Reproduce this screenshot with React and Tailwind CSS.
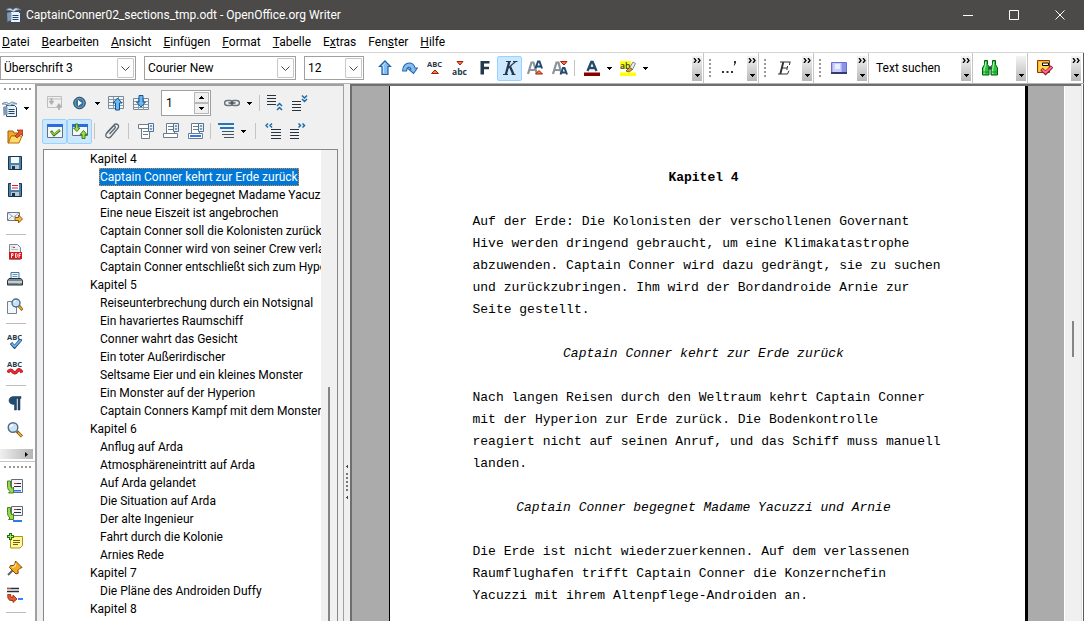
import React from "react";

const Svg = ({ children, crisp, label }) => (
  <svg viewBox="0 0 16 16" className="h-4 w-4 shrink-0" fill="none" shapeRendering={crisp ? "crispEdges" : "auto"} aria-hidden={label ? undefined : true}>
    {children}
  </svg>
);

const DocMark = () => (
  <>
    <path d="M4.500 4.500h8l2 2v9h-10z" fill="#eaf2fa" stroke="#2c4a66" />
    <path d="M6.500 8.500h6M6.500 10.500h6M6.500 12.500h6" stroke="#1f4468" strokeWidth="1" />
    <path d="M0 3c3-2.500 5-2 7 0c2-3 5-2 8 0c-3-.5-5 0-7 2C5 3.500 3 3 0 3z" fill="#c8dcee" stroke="#5f7b95" strokeWidth=".8" />
    <path d="M1 6c2-1 3.500-1 4.500 0v8c-1.500-.5-2.500-.5-4 1z" fill="#7d9bb6" />
  </>
);

const Arrow = () => (
  <svg viewBox="0 0 5 3" className="h-[3px] w-[5px] shrink-0" shapeRendering="crispEdges" aria-hidden="true">
    <path d="M0 0h5L2.500 3z" fill="#000" />
  </svg>
);

const icons = {
  newDoc: <Svg><DocMark /></Svg>,
  open: (
    <Svg>
      <path d="M1 3h5l1 2h5v3H5l-3 7H1z" fill="#f0a92b" stroke="#a15a08" />
      <path d="M4 8h11l-3 7H1.500z" fill="#ffd968" stroke="#b5700e" />
      <path d="M8 8l4-4-2-2h6v6l-2-2-4 4z" fill="#e2582a" stroke="#8e240b" strokeWidth=".7" />
    </Svg>
  ),
  save: (
    <Svg>
      <path d="M1.500 1.500h13v13h-13z" fill="#4f81a8" stroke="#17354f" />
      <path d="M4 2h8v6H4z" fill="#f7fafc" /><path d="M4 10h8v4H4z" fill="#b9c9d6" /><path d="M5 11h3v3H5z" fill="#17354f" />
    </Svg>
  ),
  saveAs: (
    <Svg>
      <path d="M1.500 1.500h13v13h-13z" fill="#4f81a8" stroke="#17354f" />
      <path d="M4 1h8v7H4z" fill="#fff" /><path d="M5 3h6v1H5zM5 5.500h6v1H5z" fill="#dd2030" /><path d="M4 10h8v4H4z" fill="#b9c9d6" /><path d="M5 11h3v3H5z" fill="#17354f" />
    </Svg>
  ),
  mail: (
    <Svg>
      <path d="M.5 3.500h12v8H.5z" fill="#f2f6fa" stroke="#67788a" />
      <path d="M1 4l5.500 4L12 4M1 11l4-4M12 11L8 7" stroke="#8494a4" strokeWidth=".8" />
      <path d="M8 8.500h3.500V6l4 4-4 4v-2.500H8z" fill="#f7b944" stroke="#8a4b07" strokeWidth=".9" />
    </Svg>
  ),
  pdf: (
    <Svg>
      <path d="M2.500 .5h8l3 3v12h-11z" fill="#eef1f4" stroke="#7b8894" />
      <path d="M4 3h4M4 5.500h7" stroke="#b9c0c7" /><path d="M6 3h2v1H6z" fill="#e33" /><path d="M2 8h13v7H2z" fill="#e01216" />
      <path d="M4.500 14V9.500h1.500v2H4.500M8.500 9.500v4h1l.7-.8V10.300l-.7-.8zM12 14V9.500h2M12 11.500h1.500" stroke="#fff" strokeWidth=".9" />
    </Svg>
  ),
  print: (
    <Svg>
      <path d="M4 1.500h8V8H4z" fill="#eff7fd" stroke="#4b7695" /><path d="M5.500 3.500h5M5.500 5.500h5" stroke="#5c97c4" />
      <path d="M2 7.500h12l1.500 2v4.500H.5V9.500z" fill="#7b8790" stroke="#29333b" /><path d="M1 10h14v2H1z" fill="#c4cdd4" /><path d="M11 12h2v1h-2z" fill="#5bdc24" />
    </Svg>
  ),
  preview: (
    <Svg>
      <path d="M.5 3.500h9v12h-9z" fill="#f3f7fa" stroke="#73828f" />
      <circle cx="9" cy="5" r="4" fill="#c8e1f5" stroke="#4a6f8d" strokeWidth="1.400" /><path d="M7 4l2-1.500" stroke="#fff" />
      <path d="M12 8l3.500 4" stroke="#84510c" strokeWidth="2.800" /><path d="M12.300 8.500l2.700 3" stroke="#efb343" strokeWidth="1.300" />
    </Svg>
  ),
  spell: (
    <Svg>
      <text x="0" y="6.500" fontSize="7.500" fontWeight="700" fontFamily="Open Sans, sans-serif" fill="#26384a">ABC</text>
      <path d="M4 10l3.500 4L14 6.500" stroke="#174e84" strokeWidth="3.200" /><path d="M4.500 10.500L7.500 13.500 13.700 7" stroke="#78b8ee" strokeWidth="1.600" />
    </Svg>
  ),
  autoSpell: (
    <Svg>
      <text x="0" y="6.500" fontSize="7.500" fontWeight="700" fontFamily="Open Sans, sans-serif" fill="#26384a">ABC</text>
      <path d="M.8 12.500q2.400-4 4.800-1t4.600-.4t4.800 1.400" stroke="#a80f16" strokeWidth="3.200" /><path d="M1 12.300q2.300-3.600 4.600-.8t4.600-.4t4.600 1.200" stroke="#ee2830" strokeWidth="2" />
    </Svg>
  ),
  pilcrow: (
    <Svg>
      <path d="M7 1.500H14v2h-1V15h-2V3.500H9.500V15h-2V9.500C4 9.500 2 8 2 5.500S4 1.500 7 1.500z" fill="#214c70" stroke="#152f48" strokeWidth=".5" />
    </Svg>
  ),
  find: (
    <Svg>
      <circle cx="6" cy="5.500" r="4.800" fill="#cae4f7" stroke="#536b80" strokeWidth="1.400" /><path d="M3 5q1-2 3-2" stroke="#fff" strokeWidth="1.300" />
      <path d="M10 9.500l5 5" stroke="#7a4d0c" strokeWidth="3" /><path d="M11 10.500l3.700 3.700" stroke="#f4b83d" strokeWidth="1.500" />
    </Svg>
  ),
  field: (
    <Svg>
      <path d="M4.500 .5h11v13h-11z" fill="#f4f7fa" stroke="#5d6e7d" /><path d="M7 4.500h7M7 7.500h7" stroke="#24303b" /><path d="M7 4h3v1H7z" fill="#d22" /><path d="M7 11h7v1.500H7z" fill="#2f78f0" />
      <path d="M.5 2h3v5l1.500 2.500L6.500 8v6H1.500l1.500-1.500C1 11 .5 9 .5 7z" fill="#9ed850" stroke="#3a7711" strokeWidth=".9" />
    </Svg>
  ),
  footnote: (
    <Svg>
      <path d="M4.500 .5h11v9h-11z" fill="#f4f7fa" stroke="#5d6e7d" /><path d="M7 3.500h7M7 6.500h7" stroke="#24303b" /><path d="M7 3h3v1H7z" fill="#d22" /><path d="M6 14h9v2H6z" fill="#2f78f0" />
      <path d="M.5 1.500h3v5L5 9l1.500-1.500v6H1.500L3 12C1 10.500 .5 8.500 .5 6.500z" fill="#9ed850" stroke="#3a7711" strokeWidth=".9" />
    </Svg>
  ),
  note: (
    <Svg>
      <path d="M3.500 3.500h12v9l-2.500 2.500H3.500z" fill="#fff59a" stroke="#aa9313" /><path d="M6 7.500h7M6 9.500h7M6 11.500h5" stroke="#70600c" />
      <path d="M3.500 0v7M0 3.500h7" stroke="#256d12" strokeWidth="3" /><path d="M3.500 1v5M1 3.500h5" stroke="#a7ec51" />
    </Svg>
  ),
  pin: (
    <Svg>
      <path d="M6 10l-5 5" stroke="#57636e" strokeWidth="2" /><path d="M8.500 1L15 7.500l-2 .8-2 2 .2 3L9 14 2.500 7.500l1-2h3l1.500-2z" fill="#f4a91e" stroke="#7d4707" /><path d="M9 3.500l-1 3-3 1" stroke="#ffe79d" strokeWidth="1.300" />
    </Svg>
  ),
  hyperline: (
    <Svg>
      <path d="M0 1.500h12M0 4.500h12" stroke="#24303b" strokeWidth="1.300" /><path d="M0 1h4v1H0z" fill="#e33" /><path d="M11 11h5v2h-5z" fill="#3c80f5" />
      <path d="M.7 7.500h3V10H6V8l4 4-4 3.500V13.500H4C1.500 13.500 .5 11 .7 7.500z" fill="#e75b29" stroke="#8a2209" strokeWidth=".8" />
    </Svg>
  ),
  up: <Svg><path d="M8 .8L13.500 6.500H11v8H5v-8H2.500z" fill="#86bfee" stroke="#1d5fa8" strokeWidth="1.200" /><path d="M6.500 13V6h-1L8 3" stroke="#c7e3fb" /></Svg>,
  curve: <Svg><path d="M.7 11C.5 6 4 2.500 8 3q4 .5 5 5h2.300l-3.800 5.500L6.500 9H9C8 6.500 5 6.500 4.500 11z" fill="#86bfee" stroke="#2366af" strokeWidth="1.100" /></Svg>,
  superscript: <Svg><text x="0" y="7" fontSize="7.500" fontWeight="700" fontFamily="Open Sans, sans-serif" fill="#26384a">ABC</text><path d="M4.500 13.500L8 10l3.500 3.500z" fill="#f37d3a" stroke="#a71d0b" /></Svg>,
  subscript: <Svg><path d="M5 1.500h6L8 5z" fill="#f37d3a" stroke="#a71d0b" /><text x="0" y="14.500" fontSize="8.500" fontWeight="700" fontFamily="Open Sans, sans-serif" fill="#26384a">abc</text></Svg>,
  bold: <Svg><path d="M3.500 1h9v2.600H7v3.200h5v2.500H7v5.200H3.500z" fill="#24384c" /></Svg>,
  italic: (
    <Svg>
      <path d="M4 1.500h5M1 14.500h5M11 1.500h4.500M9.500 14.500h4" stroke="#24384c" strokeWidth="1.100" />
      <path d="M7.300 1.500L3.800 14.500" stroke="#24384c" strokeWidth="2.300" /><path d="M13.700 1.500L6 8" stroke="#24384c" strokeWidth="1.200" /><path d="M8 6.500l3.500 8" stroke="#24384c" strokeWidth="2.300" />
    </Svg>
  ),
  grow: (
    <Svg>
      <path d="M1 14L4.500 2.500h2L10 14M2.500 10h6" stroke="#8b949d" strokeWidth="2.200" />
      <path d="M8.500 8.500L11 1.500h1.500L15 8.500M9.500 6.500h4.500" stroke="#214c70" strokeWidth="2" /><path d="M8.500 14L12 10.500l3.500 3.500z" fill="#f37d3a" stroke="#a71d0b" />
    </Svg>
  ),
  shrink: (
    <Svg>
      <path d="M1 14L4.500 2.500h2L9.500 14M2.500 10h6" stroke="#8b949d" strokeWidth="2.200" />
      <path d="M8.500 14.500L11 8h1.500l2.500 6.500M9.500 12.500h4.500" stroke="#214c70" strokeWidth="2" /><path d="M8.500 1.500h6.500L12 5z" fill="#f37d3a" stroke="#a71d0b" />
    </Svg>
  ),
  fontColor: <Svg><path d="M3.500 11L7.300 2h1.400l3.800 9M5 8h6" stroke="#24496b" strokeWidth="2.300" /><path d="M0 12.500h16v3.500H0z" fill="#880000" /></Svg>,
  highlight: (
    <Svg>
      <path d="M0 1h11v8H0zM0 12.500h16V16H0z" fill="#ffff00" /><text x="0" y="8.500" fontSize="8.500" fontWeight="600" fontFamily="Open Sans, sans-serif" fill="#26384a">ab</text>
      <path d="M9.500 8L13 2l2.500 1.500-3 6z" fill="#e9edf0" stroke="#7b8791" /><path d="M6 11l3.500-3.500 3 2L9 12z" fill="#d8a13a" stroke="#70400a" strokeWidth=".8" />
    </Svg>
  ),
  dots: <Svg><path d="M1 11h2v2H1zM5.500 11h2v2h-2zM10 11h2v2h-2z" fill="#333" /><path d="M13 1h2v2l-1.500 2.500h-.8L13.500 3H13z" fill="#333" /></Svg>,
  emphasis: (
    <Svg>
      <path d="M4 2h10.500M2 14h9.500M6 8h5" stroke="#333" strokeWidth="1.100" /><path d="M7.300 2L4.300 14" stroke="#333" strokeWidth="1.900" />
      <path d="M14 2l-.6 3M11.600 6l-.8 4M11.500 14l1.500-3.300" stroke="#333" />
    </Svg>
  ),
  screen: (
    <Svg>
      <path d="M.5 2.500h15v10H.5z" fill="#8d93ea" stroke="#6a70d2" /><path d="M1.500 3h9v9h-9z" fill="#c9cffb" /><path d="M4 4h5v5H4z" fill="#eceeff" /><path d="M0 12h16v2H0z" fill="#333a70" /><path d="M0 12h2v2H0z" fill="#444" />
    </Svg>
  ),
  binoculars: (
    <Svg>
      <path d="M2.500 .5h3v4l1.500 2v8.500H.5V8l2-3.500zM10.500 .5h3v4l2 3.500v7H9V6.500l1.500-2z" fill="#27c83b" stroke="#075c12" />
      <path d="M3.500 2v3L2.200 9v5M11.500 2v3l-.8 4v5" stroke="#a2f79e" strokeWidth="1.200" /><path d="M6.500 6.500h3v3h-3z" fill="#343b58" /><path d="M1 12h6M9.500 12h6" stroke="#0a7a1a" strokeWidth=".8" />
    </Svg>
  ),
  stamp: (
    <Svg>
      <path d="M.5 .5h12v12H.5z" fill="#fdb827" stroke="#913807" /><path d="M2 2h9v9H2z" fill="#ffd454" /><path d="M5.500 3h6v2.500h-6z" fill="#fff" stroke="#000" />
      <path d="M4.500 9l4 4L15 6.500" stroke="#94132b" strokeWidth="3.500" /><path d="M5 9.500l3.500 3 6-5.500" stroke="#ff7488" strokeWidth="1.700" />
    </Svg>
  ),
  toggleOff: (
    <Svg>
      <path d="M.5 1.500h14v11H.5z" stroke="#bebebe" /><path d="M1 4h13" stroke="#bebebe" />
      <path d="M4.500 3v4M2.500 6l2 2.500 2-2.500M12 15v-4M10 12l2-2.500 2 2.500" stroke="#b0b0b0" strokeWidth="1.800" />
    </Svg>
  ),
  play: <Svg><circle cx="7.500" cy="8" r="5.800" fill="#386f99" stroke="#24465f" /><circle cx="7.500" cy="8" r="4.500" stroke="#84b0cf" strokeWidth=".8" /><path d="M6 5L10 8l-4 3z" fill="#fff" /></Svg>,
  prev: (
    <Svg>
      <path d="M.5 1.500h15v12H.5z" fill="#f3f6f9" stroke="#7a8996" /><path d="M1 4.500h15M1 7.500h15M1 10.500h15M5.500 2v12M10.500 2v12" stroke="#8a98a5" />
      <path d="M9.500 3l4.500 5h-2.500v7h-4V8H5z" fill="#6bb8f2" stroke="#15558f" />
    </Svg>
  ),
  next: (
    <Svg>
      <path d="M.5 3.500h15v11H.5z" fill="#f3f6f9" stroke="#7a8996" /><path d="M1 6.500h15M1 9.500h15M1 12.500h15M5.500 4v11M10.500 4v11" stroke="#8a98a5" />
      <path d="M6 .5h4V7h2.500L8 12 3.500 7H6z" fill="#6bb8f2" stroke="#15558f" />
    </Svg>
  ),
  link: <Svg><rect x=".6" y="5.500" width="8" height="5" rx="2.500" stroke="#69747d" strokeWidth="1.500" /><rect x="7.400" y="5.500" width="8" height="5" rx="2.500" stroke="#69747d" strokeWidth="1.500" /><path d="M4.500 8h7" stroke="#3f4850" strokeWidth="1.300" /></Svg>,
  levelUp: <Svg crisp><path d="M0 0h9v1H0zM0 3h9v1H0zM0 6h9v1H0zM0 9h9v1H0z" fill="#26333e" /><path shapeRendering="auto" d="M10 11l2.500-2.500L15 11M10 15l2.500-2.500L15 15" stroke="#1f6ba6" strokeWidth="1.500" /></Svg>,
  levelDown: <Svg crisp><path d="M0 6h9v1H0zM0 9h9v1H0zM0 12h9v1H0zM0 15h9v1H0z" fill="#26333e" /><path shapeRendering="auto" d="M10 .5L12.500 3 15 .5M10 4L12.500 6.500 15 4" stroke="#1f6ba6" strokeWidth="1.500" /></Svg>,
  check: <Svg><path d="M.5 1.500h15v13H.5z" fill="#f6f9fc" stroke="#60717f" /><path d="M0 1h16v3H0z" fill="#2d6cdf" /><path d="M4 8l3 4 6-5" stroke="#356f12" strokeWidth="2.600" /><path d="M4.500 9L7 11.500 12.500 7" stroke="#96db40" strokeWidth="1.200" /></Svg>,
  toggleOn: (
    <Svg>
      <path d="M.5 1.500h15v11H.5z" fill="#f6f9fc" stroke="#60717f" /><path d="M0 1h16v3H0z" fill="#2d6cdf" />
      <path d="M3.500 1h2.500v4h2L4.800 8.500 1.500 5h2zM10 15.500v-4H8l3.500-4 3.500 4h-2v4z" fill="#9fe143" stroke="#2f7411" strokeWidth=".9" />
    </Svg>
  ),
  clip: <Svg><path d="M2.500 10L10 2c2.500-2.500 6 .5 4 3L7 13.500c-2.500 3-7 0-4.500-3L9 3.500c1.500-1.500 3 0 2 1.500L5.500 11" stroke="#5c6871" strokeWidth="1.300" /></Svg>,
  header: <Svg><path d="M3.500 5.500h8v10h-8z" fill="#fff" stroke="#6d7c88" /><path d="M.5 1.500h10v4H.5z" fill="#fff" stroke="#6d7c88" /><path d="M5 8.500h5M5 11.500h5" stroke="#6d7c88" /><path d="M10.500 .5h5v8h-5z" fill="#eaf2fa" stroke="#527391" /><path d="M11.500 3.500L13 2l1.500 1.500zM11.500 5.500L13 7l1.500-1.500z" fill="#174f8a" /></Svg>,
  footer: <Svg><path d="M3.500 .5h8v10h-8z" fill="#fff" stroke="#6d7c88" /><path d="M.5 10.500h14v4H.5z" fill="#fff" stroke="#6d7c88" /><path d="M5 3.500h5M5 6.500h5" stroke="#6d7c88" /><path d="M10.500 .5h5v8h-5z" fill="#eaf2fa" stroke="#527391" /><path d="M11.500 3.500L13 2l1.500 1.500zM11.500 5.500L13 7l1.500-1.500z" fill="#174f8a" /></Svg>,
  anchor: <Svg><path d="M3.500 .5h8v10h-8z" fill="#fff" stroke="#6d7c88" /><path d="M.5 10.500h14v5H.5z" fill="#fff" stroke="#6d7c88" /><path d="M2 12h11v2H2z" fill="#2f78f0" /><path d="M5 3.500h5M5 6.500h5" stroke="#6d7c88" /><path d="M10.500 .5h5v8h-5z" fill="#eaf2fa" stroke="#527391" /><path d="M11.500 3.500L13 2l1.500 1.500zM11.500 5.500L13 7l1.500-1.500z" fill="#174f8a" /></Svg>,
  outline: <Svg crisp><path d="M0 0h16v2H0zM2 4h14v2H2z" fill="#2276bb" /><path d="M4 8h12v1H4zM4 11h12v1H4zM6 14h10v1H6z" fill="#43535f" /></Svg>,
  promote: <Svg crisp><path d="M6 6h10v1H6zM6 9h10v1H6zM6 12h10v1H6zM6 15h10v1H6z" fill="#26333e" /><path shapeRendering="auto" d="M3 .5L1 2.500l2 2M7 .5L5 2.500l2 2" stroke="#1f6ba6" strokeWidth="1.500" /></Svg>,
  demote: <Svg crisp><path d="M0 6h9v1H0zM0 9h9v1H0zM0 12h9v1H0zM0 15h9v1H0z" fill="#26333e" /><path shapeRendering="auto" d="M8.500 .5l2 2-2 2M12.500 .5l2 2-2 2" stroke="#1f6ba6" strokeWidth="1.500" /></Svg>,
};

const menus = [
  ["", "D", "atei"], ["", "B", "earbeiten"], ["", "A", "nsicht"], ["", "E", "infügen"], ["", "F", "ormat"],
  ["", "T", "abelle"], ["E", "x", "tras"], ["Fen", "s", "ter"], ["", "H", "ilfe"],
];

const outline = [
  ["Kapitel 4", ["Captain Conner kehrt zur Erde zurück", "Captain Conner begegnet Madame Yacuzzi und Arnie", "Eine neue Eiszeit ist angebrochen", "Captain Conner soll die Kolonisten zurückholen", "Captain Conner wird von seiner Crew verlassen", "Captain Conner entschließt sich zum Hyperflug"]],
  ["Kapitel 5", ["Reiseunterbrechung durch ein Notsignal", "Ein havariertes Raumschiff", "Conner wahrt das Gesicht", "Ein toter Außerirdischer", "Seltsame Eier und ein kleines Monster", "Ein Monster auf der Hyperion", "Captain Conners Kampf mit dem Monster"]],
  ["Kapitel 6", ["Anflug auf Arda", "Atmosphäreneintritt auf Arda", "Auf Arda gelandet", "Die Situation auf Arda", "Der alte Ingenieur", "Fahrt durch die Kolonie", "Arnies Rede"]],
  ["Kapitel 7", ["Die Pläne des Androiden Duffy"]],
  ["Kapitel 8", []],
];

const Tool = ({ icon, label, active }) => (
  <button aria-label={label} className={active ? "flex h-[25px] w-[25px] shrink-0 items-center justify-center rounded-[2px] border border-[#99d1ff] bg-[#cce8ff]" : "flex h-[25px] w-[25px] shrink-0 items-center justify-center"}>
    {icons[icon]}
  </button>
);

const Drop = ({ label }) => (
  <button aria-label={label} className="flex h-[25px] w-[11px] shrink-0 items-center justify-center"><Arrow /></button>
);

const Sep = () => <div className="mx-[2px] h-4 w-px shrink-0 bg-[#c4c4c4]" />;

const Grip = () => <div className="h-[18px] w-[2px] shrink-0 border-l-2 border-dotted border-[#999]" />;

const Overflow = ({ plain, label }) => (
  <button aria-label={label} className="ml-auto flex h-[25px] w-[10px] shrink-0 flex-col items-center justify-between bg-linear-to-b from-[#f4f4f4] to-[#b8b8b8] pt-[2px] pb-1">
    <svg viewBox="0 0 8 5" className="h-[5px] w-2" fill="none" aria-hidden="true">
      {!plain && <path d="M1 0l2 2.500L1 5M5 0l2 2.500L5 5" stroke="#000" strokeWidth="1.300" />}
    </svg>
    <Arrow />
  </button>
);

const Combo = ({ label, value, width }) => (
  <div className={`relative h-6 shrink-0 ${width}`}>
    <select aria-label={label} className="h-6 w-full appearance-none border border-[#a0a0a0] bg-white pl-[3px] text-[12px] text-black outline-none">
      <option>{value}</option>
    </select>
    <span className="pointer-events-none absolute top-[2px] right-[2px] flex h-5 w-[17px] items-center justify-center rounded-[1px] border border-[#c8c8c8] bg-[#fdfdfd]">
      <svg viewBox="0 0 9 5" className="h-[5px] w-[9px]" fill="none" aria-hidden="true"><path d="M.5 .5l4 4 4-4" stroke="#444" /></svg>
    </span>
  </div>
);

const MiniBar = ({ icon, label }) => (
  <div className="flex w-[55px] shrink-0 items-center border-r border-[#c6c6c6] pr-[1px] pl-[5px]">
    <Grip />
    <span className="w-[5px]" />
    <Tool icon={icon} label={label} />
    <Overflow label={`${label}: weitere`} />
  </div>
);

const SideTool = ({ icon, label, drop }) => (
  <div className={`flex h-[27px] shrink-0 items-center ${drop ? "justify-between pl-[2px] pr-[3px]" : "pl-[7px]"}`}>
    <button aria-label={label} className="flex h-[25px] w-4 items-center justify-center">{icons[icon]}</button>
    {drop && <Drop label={`${label}: Optionen`} />}
  </div>
);

const SideSep = () => <div className="mt-[4px] mb-[3px] ml-[6px] h-px w-5 shrink-0 bg-[#bdbdbd]" />;

const SideGrip = () => <div className="mx-1 h-[2px] shrink-0 border-t-2 border-dotted border-[#999]" />;

const side1 = [["newDoc", "Neu", true], ["open", "Öffnen"], ["save", "Speichern"], ["saveAs", "Speichern unter"], ["mail", "Als E-Mail senden"]];
const side2 = [["pdf", "Als PDF exportieren"], ["print", "Drucken"], ["preview", "Seitenansicht"]];
const side3 = [["spell", "Rechtschreibung"], ["autoSpell", "Automatische Rechtschreibprüfung"]];
const side4 = [["pilcrow", "Steuerzeichen"], ["find", "Suchen"]];
const side5 = [["field", "Feldbefehl"], ["footnote", "Fußnote"], ["note", "Notiz"], ["pin", "Textmarke"], ["hyperline", "Querverweis"]];
const SideGroup = ({ items }) => items.map(([icon, label, drop]) => <SideTool key={icon} icon={icon} label={label} drop={drop} />);

const Para = ({ lines }) => (
  <p className="mb-[22px] whitespace-nowrap">
    {lines.map((l) => <span key={l} className="block">{l}</span>)}
  </p>
);

export default function App() {
  return (
    <div className="flex h-screen flex-col overflow-hidden bg-white font-['Roboto','Open_Sans',sans-serif] text-[12px] text-black">
      <header className="flex h-[30px] shrink-0 items-center bg-[#4b4a48] pl-[6px] text-white">
        <Svg><DocMark /></Svg>
        <h1 className="ml-1">CaptainConner02_sections_tmp.odt - OpenOffice.org Writer</h1>
        <div className="ml-auto flex pr-[1px]">
          {[["Minimieren", "M0 5.500h10"], ["Maximieren", "M.5 .5h9v9h-9z"], ["Schließen", "M.5 .5l9 9M9.500 .5l-9 9"]].map(([label, d]) => (
            <button key={label} aria-label={label} className="flex h-[30px] w-[46px] items-center justify-center">
              <svg viewBox="0 0 10 10" className="h-[10px] w-[10px]" fill="none" aria-hidden="true"><path d={d} stroke="#fff" /></svg>
            </button>
          ))}
        </div>
      </header>

      <nav className="flex h-[22px] shrink-0 items-center gap-3 pt-[2px] pl-[2px]">
        {menus.map(([a, b, c]) => (
          <button key={a + b + c}>{a}<span className="underline">{b}</span>{c}</button>
        ))}
      </nav>

      <div className="flex h-8 shrink-0 border-t border-b border-t-[#d4d4d4] border-b-[#b4b4b4]">
        <div className="flex min-w-0 flex-1 items-center border-r border-[#c6c6c6] pr-[1px]">
          <Combo label="Absatzvorlage" value="Überschrift 3" width="w-[136px]" />
          <span className="w-2 shrink-0" />
          <Combo label="Schriftart" value="Courier New" width="w-[152px]" />
          <span className="w-2 shrink-0" />
          <Combo label="Schriftgröße" value="12" width="w-[60px]" />
          <span className="w-2 shrink-0" />
          <Tool icon="up" label="Nach oben" />
          <Tool icon="curve" label="Wiederholen" />
          <Tool icon="superscript" label="Hochgestellt" />
          <Tool icon="subscript" label="Tiefgestellt" />
          <Tool icon="bold" label="Fett" />
          <Tool icon="italic" label="Kursiv" active />
          <Tool icon="grow" label="Schrift vergrößern" />
          <Tool icon="shrink" label="Schrift verkleinern" />
          <Sep />
          <span className="w-[2px] shrink-0" />
          <Tool icon="fontColor" label="Zeichenfarbe" />
          <Drop label="Zeichenfarbe wählen" />
          <Tool icon="highlight" label="Hervorheben" />
          <Drop label="Hervorhebungsfarbe wählen" />
          <Overflow label="Format: weitere" />
        </div>
        <MiniBar icon="dots" label="Auslassung" />
        <MiniBar icon="emphasis" label="Betonung" />
        <MiniBar icon="screen" label="Bildschirm" />
        <div className="flex w-[104px] shrink-0 items-center border-r border-[#c6c6c6] pr-[1px] pl-[7px]">
          <button>Text suchen</button>
          <Overflow label="Suche: weitere" />
        </div>
        <div className="flex w-[55px] shrink-0 items-center border-r border-[#c6c6c6] pr-[1px] pl-1">
          <Tool icon="binoculars" label="Suchen und Ersetzen" />
          <Overflow plain label="Suchleiste: weitere" />
        </div>
        <div className="flex w-[56px] shrink-0 items-center border-r border-[#5a5a5a] pr-[2px] pl-1">
          <Tool icon="stamp" label="Prüfen" />
          <Overflow label="Prüfung: weitere" />
        </div>
      </div>

      <main className="flex min-h-0 flex-1">
        <aside className="flex w-[35px] shrink-0 flex-col overflow-hidden pt-1">
          <SideGrip />
          <div className="h-[5px] shrink-0" />
          <SideGroup items={side1} />
          <SideSep />
          <SideGroup items={side2} />
          <SideSep />
          <SideGroup items={side3} />
          <SideSep />
          <SideGroup items={side4} />
          <button aria-label="Weitere Symbole" className="mt-[6px] mr-[2px] flex h-[10px] shrink-0 items-center justify-end bg-linear-to-r from-[#f0f0f0] to-[#b4b4b4] pr-[5px]">
            <svg viewBox="0 0 3 5" className="h-[5px] w-[3px]" aria-hidden="true"><path d="M0 0l3 2.500L0 5z" fill="#000" /></svg>
          </button>
          <div className="mt-[2px] mb-1 h-px shrink-0 bg-[#c6c6c6]" />
          <SideGrip />
          <div className="h-[5px] shrink-0" />
          <SideGroup items={side5} />
          <SideSep />
        </aside>

        <section className="flex w-[308px] shrink-0 flex-col border-t-2 border-l-2 border-[#a0a0a0] bg-[#f0f0f0] pl-[5px]">
          <div className="mt-[3px] flex h-7 shrink-0 items-center">
            <Tool icon="toggleOff" label="Umschalten" />
            <Tool icon="play" label="Navigation" />
            <Drop label="Navigation wählen" />
            <Tool icon="prev" label="Zurück" />
            <Tool icon="next" label="Weiter" />
            <span className="w-2 shrink-0" />
            <div className="flex h-[26px] w-[50px] shrink-0 border border-[#a0a0a0] bg-white p-px">
              <input aria-label="Seite" defaultValue="1" className="w-8 min-w-0 flex-1 pl-[3px] outline-none" />
              <div className="flex w-[15px] flex-col">
                <button aria-label="Mehr" className="flex flex-1 rotate-180 items-center justify-center border border-[#b8b8b8] bg-[#f0f0f0]"><Arrow /></button>
                <button aria-label="Weniger" className="flex flex-1 items-center justify-center border border-[#b8b8b8] bg-[#f0f0f0]"><Arrow /></button>
              </div>
            </div>
            <span className="w-2 shrink-0" />
            <Tool icon="link" label="Ziehmodus" />
            <Drop label="Ziehmodus wählen" />
            <span className="w-[2px] shrink-0" />
            <Sep />
            <Tool icon="levelUp" label="Kapitel hoch" />
            <Tool icon="levelDown" label="Kapitel runter" />
          </div>
          <div className="flex h-7 shrink-0 items-center">
            <Tool icon="check" label="Auswahlbox" active />
            <Tool icon="toggleOn" label="Inhaltsansicht" active />
            <Sep />
            <span className="w-[2px] shrink-0" />
            <Tool icon="clip" label="Erinnerung setzen" />
            <span className="w-[2px] shrink-0" />
            <Sep />
            <span className="w-[2px] shrink-0" />
            <Tool icon="header" label="Kopfzeile" />
            <Tool icon="footer" label="Fußzeile" />
            <Tool icon="anchor" label="Anker" />
            <Sep />
            <Tool icon="outline" label="Überschriftenebenen" />
            <Drop label="Ebenen wählen" />
            <span className="w-[4px] shrink-0" />
            <Sep />
            <span className="w-[2px] shrink-0" />
            <Tool icon="promote" label="Ebene höher" />
            <Tool icon="demote" label="Ebene tiefer" />
          </div>
          <div className="mt-1 mr-[5px] ml-px flex min-h-0 flex-1 border border-b-0 border-[#828790] bg-white">
            <ul className="min-w-0 flex-1 overflow-hidden pl-[46px] leading-[18px] whitespace-nowrap">
              {outline.map(([chapter, scenes]) => (
                <li key={chapter}>
                  {chapter}
                  <ul className="pl-[9px]">
                    {scenes.map((s, i) => (
                      <li key={s} className="flex">
                        <span className={chapter === "Kapitel 4" && i === 0 ? "border border-dotted border-[#e8872b] bg-[#0078d7] leading-4 text-white" : "pl-px"}>{s}</span>
                      </li>
                    ))}
                  </ul>
                </li>
              ))}
            </ul>
            <div className="flex w-4 shrink-0 justify-center bg-[#f0f0f0] pt-[237px]">
              <div className="w-[2px] bg-[#858585]" />
            </div>
          </div>
        </section>

        <div className="flex w-[7px] shrink-0 flex-col items-center justify-center border-l border-[#a0a0a0] bg-[#f0f0f0] pt-[258px]">
          <svg viewBox="0 0 4 34" className="h-[34px] w-1" shapeRendering="crispEdges" aria-hidden="true">
            <path d="M3 0v3L1 1.500zM3 31v3l-2-1.500z" fill="#444" />
            <path d="M1 8h2v2H1zM1 12h2v2H1zM1 16h2v2H1zM1 20h2v2H1zM1 24h2v2H1z" fill="#777" />
          </svg>
        </div>

        <div className="flex min-w-0 flex-1 overflow-hidden border-t-2 border-l-2 border-[#6e6e6e] bg-[#ababab]">
          <div className="flex min-w-0 flex-1 justify-center">
            <article className="w-full max-w-[639px] border-r-[3px] border-l border-black bg-white pt-[81px] pr-[90px] pl-[83px] font-['Liberation_Mono',monospace] text-[13px] leading-[22px]">
              <h2 className="mb-[22px] text-center font-bold">Kapitel 4</h2>
              <Para lines={["Auf der Erde: Die Kolonisten der verschollenen Governant", "Hive werden dringend gebraucht, um eine Klimakatastrophe", "abzuwenden. Captain Conner wird dazu gedrängt, sie zu suchen", "und zurückzubringen. Ihm wird der Bordandroide Arnie zur", "Seite gestellt."]} />
              <h3 className="mb-[22px] text-center italic">Captain Conner kehrt zur Erde zurück</h3>
              <Para lines={["Nach langen Reisen durch den Weltraum kehrt Captain Conner", "mit der Hyperion zur Erde zurück. Die Bodenkontrolle", "reagiert nicht auf seinen Anruf, und das Schiff muss manuell", "landen."]} />
              <h3 className="mb-[22px] text-center italic">Captain Conner begegnet Madame Yacuzzi und Arnie</h3>
              <Para lines={["Die Erde ist nicht wiederzuerkennen. Auf dem verlassenen", "Raumflughafen trifft Captain Conner die Konzernchefin", "Yacuzzi mit ihrem Altenpflege-Androiden an."]} />
            </article>
          </div>
          <div className="flex w-[17px] shrink-0 justify-center border-l border-white bg-[#f0f0f0] pt-[235px]">
            <div className="h-9 w-[2px] bg-[#858585]" />
          </div>
        </div>
        <div className="w-[3px] shrink-0 border-r border-l border-r-[#5a5a5a] border-l-[#e0e0e0] bg-white" />
      </main>
    </div>
  );
}
